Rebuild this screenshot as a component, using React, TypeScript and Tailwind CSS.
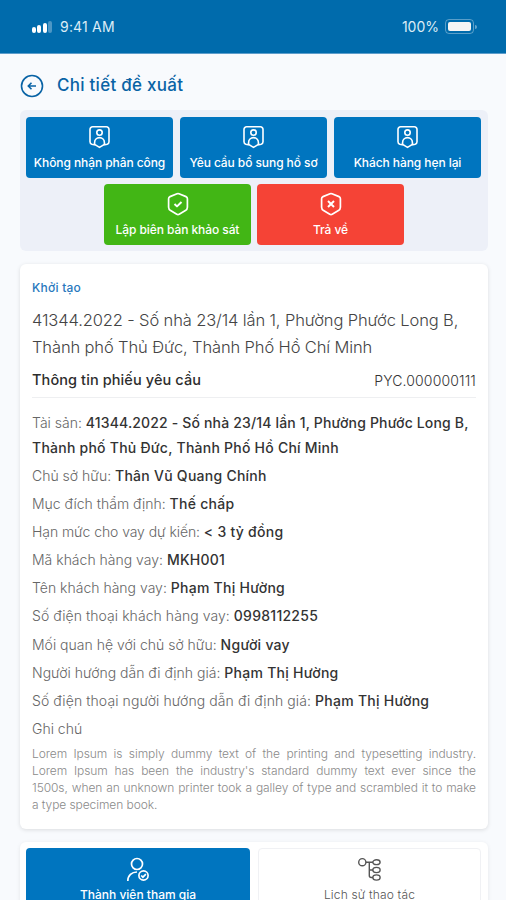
import type { ReactNode } from 'react';

interface Detail {
  label: string;
  value: string;
  labelClass?: string;
}

const details: Detail[] = [
  { label: 'Chủ sở hữu:', value: 'Thân Vũ Quang Chính' },
  { label: 'Mục đích thẩm định:', value: 'Thế chấp' },
  { label: 'Hạn mức cho vay dự kiến:', value: '< 3 tỷ đồng', labelClass: 'tracking-[-0.08px]' },
  { label: 'Mã khách hàng vay:', value: 'MKH001' },
  { label: 'Tên khách hàng vay:', value: 'Phạm Thị Hường' },
  { label: 'Số điện thoại khách hàng vay:', value: '0998112255', labelClass: 'tracking-[0.06px]' },
  { label: 'Mối quan hệ với chủ sở hữu:', value: 'Người vay' },
  { label: 'Người hướng dẫn đi định giá:', value: 'Phạm Thị Hường' },
  { label: 'Số điện thoại người hướng dẫn đi định giá:', value: 'Phạm Thị Hường', labelClass: 'tracking-[0.09px]' },
];

function BadgeUserIcon() {
  return (
    <svg width="24" height="24" viewBox="0 0 24 24" fill="none" stroke="currentColor" strokeWidth="1.6" strokeLinejoin="round">
      <path d="M4.600 1.800h13.800A2.600 2.600 0 0 1 21 4.400v12.400q0 2-1.800 2.400l-3.600.7L11.500 22.400l-4.100-2.500-3.600-.7Q2 18.800 2 16.800V4.400a2.600 2.600 0 0 1 2.600-2.600Z" />
      <circle cx="11.500" cy="7.600" r="2.700" />
      <path d="M6.600 19v-1.500a4.900 4.900 0 0 1 9.800 0V19" />
    </svg>
  );
}

function ShieldIcon({ children }: { children: ReactNode }) {
  return (
    <svg width="24" height="24" viewBox="0 0 24 24" fill="none" stroke="currentColor" strokeWidth="1.7" strokeLinejoin="round">
      <path d="M11 1.800 4 4.600Q2.600 5.200 2.600 6.700v8.500c0 1.700.8 2.600 2 3.400l6.200 3.700q1.200.7 2.400 0l6.200-3.700c1.200-.8 2-1.700 2-3.400V6.700q0-1.500-1.400-2.100l-7-2.800q-1-.4-2 0Z" />
      {children}
    </svg>
  );
}

function MemberIcon() {
  return (
    <svg width="24" height="25" viewBox="0 0 24 25" fill="none" stroke="currentColor" strokeWidth="1.700">
      <circle cx="11" cy="7" r="5.500" />
      <path d="M1.800 24c0-5.800 4-9 9.200-9" />
      <circle cx="17.500" cy="18.500" r="4.600" />
      <path d="m15.200 18.500 1.700 1.700 3-3" />
    </svg>
  );
}

function TreeIcon() {
  return (
    <svg width="24" height="25" viewBox="0 0 24 25" fill="none" stroke="currentColor" strokeWidth="1.400">
      <circle cx="4.300" cy="5.200" r="3.600" />
      <path d="M7.900 5.200H15M11.300 5.200v13.300q0 2 2 2H15M11.300 13H15" />
      <ellipse cx="18.500" cy="5.200" rx="3.600" ry="2.400" />
      <ellipse cx="18.500" cy="13" rx="3.600" ry="2.600" />
      <ellipse cx="18.500" cy="20.500" rx="3.600" ry="2.600" />
    </svg>
  );
}

function ActionButton({ icon, color, children }: { icon: ReactNode; color: string; children: ReactNode }) {
  return (
    <button className={`flex h-[61px] w-[147px] flex-col items-center rounded pt-2 text-white ${color}`}>
      {icon}
      <span className="mt-[5px] text-xs leading-[18px] font-medium tracking-[-0.08px] whitespace-nowrap">{children}</span>
    </button>
  );
}

export default function App() {
  return (
    <div className="h-[900px] w-[506px] overflow-hidden bg-[#f8fafd] font-['Inter','Noto_Sans',sans-serif]">
      {/* Status bar */}
      <div className="flex h-[54px] items-center justify-between border-b border-[#5d9dcb] bg-[#006bac] pr-[29px] pl-8 text-[#dcecf6]">
        <div className="flex items-center">
          <div className="flex h-3 w-5 items-end gap-[1.500px]">
            <span className="h-[6px] w-[4px] rounded-sm bg-white" />
            <span className="h-[8px] w-[4px] rounded-sm bg-white" />
            <span className="h-[10px] w-[4px] rounded-sm bg-white" />
            <span className="h-[12px] w-[4px] rounded-sm bg-white/30" />
          </div>
          <span className="ml-2 text-sm tracking-[0.2px]">9:41 AM</span>
        </div>
        <div className="flex items-center">
          <span className="text-sm">100%</span>
          <div className="ml-[6px] h-[15px] w-[29px] rounded border border-white/35 p-[2px]">
            <div className="h-full rounded-[2px] bg-[#f5f5f5]" />
          </div>
          <span className="ml-px h-1 w-[2px] rounded-r bg-white/40" />
        </div>
      </div>

      {/* Title */}
      <div className="flex h-14 items-center pt-2 pl-5 text-[#0963a5]">
        <svg width="24" height="24" viewBox="0 0 24 24" fill="none" stroke="currentColor" strokeWidth="1.600">
          <circle cx="12" cy="12" r="10.500" />
          <path d="M16 12H8.500M11.500 8.800 8.300 12l3.200 3.200" />
        </svg>
        <h1 className="ml-[13px] text-[17px] font-medium tracking-[0.26px]">Chi tiết đề xuất</h1>
      </div>

      {/* Actions */}
      <div className="mx-5 flex h-[141px] w-[468px] flex-col gap-[6px] rounded-md bg-[#edf0f8] pt-[7px]">
        <div className="flex gap-[7px] pl-[6px]">
          <ActionButton icon={<BadgeUserIcon />} color="bg-[#0075bf]">Không nhận phân công</ActionButton>
          <ActionButton icon={<BadgeUserIcon />} color="bg-[#0075bf]">Yêu cầu bổ sung hồ sơ</ActionButton>
          <ActionButton icon={<BadgeUserIcon />} color="bg-[#0075bf]">Khách hàng hẹn lại</ActionButton>
        </div>
        <div className="flex gap-[6px] pl-[84px]">
          <ActionButton icon={<ShieldIcon><path d="m8.500 12 2.500 2.400 4.500-4.400" strokeWidth="2" /></ShieldIcon>} color="bg-[#42b615]">
            Lập biên bản khảo sát
          </ActionButton>
          <ActionButton icon={<ShieldIcon><path d="m9 9 6 6m0-6-6 6" strokeWidth="2" /></ShieldIcon>} color="bg-[#f54336]">
            Trả về
          </ActionButton>
        </div>
      </div>

      {/* Request details */}
      <div className="mx-5 mt-[13px] h-[565px] w-[468px] rounded-md bg-white px-3 pt-[15px] text-[#333] shadow-[0_1px_4px_rgba(0,0,0,0.120)]">
        <p className="text-xs leading-[18px] font-medium tracking-[0.25px] text-[#2878bd]">Khởi tạo</p>
        <h2 className="mt-[10px] text-[16.5px] leading-[27px] font-light tracking-[-0.13px] whitespace-nowrap text-[#444]">
          <span className="block">41344.2022 - Số nhà 23/14 lần 1, Phường Phước Long B,</span>
          <span className="block">Thành phố Thủ Đức, Thành Phố Hồ Chí Minh</span>
        </h2>
        <div className="mt-[3px] flex h-[34px] w-[444px] items-center justify-between border-b border-[#eeeff1] text-sm">
          <span className="text-[14.5px] font-medium tracking-[0.1px] text-[#2d2d2d]">Thông tin phiếu yêu cầu</span>
          <span className="font-light tracking-[0.15px]">PYC.000000111</span>
        </div>
        <div className="mt-[12px] text-sm whitespace-nowrap">
          <p className="mb-[3px] leading-[25px] font-medium">
            <span className="block tracking-[0.16px]">
              <span className="font-light tracking-normal text-[#666]">Tài sản: </span>
              41344.2022 - Số nhà 23/14 lần 1, Phường Phước Long B,
            </span>
            <span className="block tracking-[0.24px]">Thành phố Thủ Đức, Thành Phố Hồ Chí Minh</span>
          </p>
          {details.map((item) => (
            <p key={item.label} className="h-[28.1px] leading-[25px]">
              <span className={`font-light text-[#666] ${item.labelClass || ''}`}>{item.label} </span>
              <span className="font-medium tracking-[0.26px]">{item.value}</span>
            </p>
          ))}
          <p className="leading-[25px] font-light text-[#666]">Ghi chú</p>
        </div>
        <div className="mt-1 w-[444px] text-[12px] leading-[17px] font-light tracking-[-0.08px] text-[#8a8a8a]">
          <p className="text-justify [text-align-last:justify]">Lorem Ipsum is simply dummy text of the printing and typesetting industry.</p>
          <p className="text-justify [text-align-last:justify]">Lorem Ipsum has been the industry's standard dummy text ever since the</p>
          <p className="text-justify [text-align-last:justify]">1500s, when an unknown printer took a galley of type and scrambled it to make</p>
          <p>a type specimen book.</p>
        </div>
      </div>

      {/* Tabs */}
      <div className="mx-5 mt-[13px] flex w-[468px] gap-2 rounded-md bg-white p-[6px] shadow-[0_1px_4px_rgba(0,0,0,0.080)]">
        <button className="flex h-[64px] w-[224px] flex-col items-center rounded bg-[#0075bf] pt-[9px] text-white">
          <MemberIcon />
          <span className="mt-1 text-xs leading-[18px] font-medium">Thành viên tham gia</span>
        </button>
        <button className="flex h-[64px] w-[223px] flex-col items-center rounded border border-[#f0f1f4] pt-2 text-[#555]">
          <TreeIcon />
          <span className="mt-1 text-xs leading-[18px] font-light tracking-[0.18px]">Lịch sử thao tác</span>
        </button>
      </div>
    </div>
  );
}
